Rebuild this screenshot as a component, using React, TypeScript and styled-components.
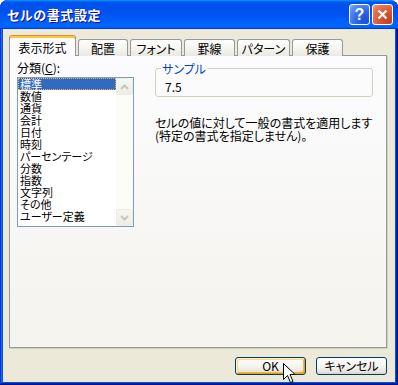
import React from "react";
import styled, { createGlobalStyle, css } from "styled-components";

const GlobalStyle = createGlobalStyle`
  html, body {
    margin: 0;
    padding: 0;
    background: #ffffff;
  }
  body {
    font-family: "Noto Sans CJK JP", "Noto Sans", sans-serif;
    font-size: 12px;
    font-feature-settings: "palt";
    color: #000;
  }
  * {
    box-sizing: border-box;
  }
`;

const Window = styled.div`
  position: relative;
  width: 398px;
  height: 385px;
  display: flex;
  flex-direction: column;
  background: #0054e3;
  border-radius: 8px 8px 0 0;
  box-shadow: inset -1px -1px #00138c, inset 1px 0 #0831d9, inset -2px -2px #001ea0,
    inset 2px 0 #166aee;
  overflow: hidden;
`;

const TitleBar = styled.div`
  height: 29px;
  flex: none;
  display: flex;
  align-items: center;
  justify-content: space-between;
  padding: 0 5px 0 7px;
  border-radius: 8px 8px 0 0;
  background: linear-gradient(
    180deg,
    #0997ff 0%,
    #0053ee 8%,
    #0050ee 40%,
    #06f 88%,
    #06f 93%,
    #005bff 95%,
    #003dd7 96%,
    #003dd7 100%
  );
`;

const Title = styled.div`
  color: #fff;
  font-weight: 700;
  font-size: 13px;
  letter-spacing: 0.6px;
  text-shadow: 1px 1px #0f1089;
`;

const Controls = styled.div`
  display: flex;
  gap: 2px;
`;

const ControlButton = styled.div<{ $kind: "help" | "close" }>`
  width: 21px;
  height: 21px;
  border: 1px solid #fff;
  border-radius: 3px;
  display: flex;
  align-items: center;
  justify-content: center;
  color: #fff;
  font-family: "Liberation Sans", sans-serif;
  font-weight: 700;
  font-size: 16px;
  ${(p) =>
    p.$kind === "help"
      ? css`
          background: radial-gradient(circle at 85% 85%, #1a4fd8 0%, #2a63e8 40%, #5a8ef5 80%, #8fb2fa 100%);
        `
      : css`
          background: radial-gradient(circle at 85% 85%, #c5431b 0%, #d9532b 40%, #e8795a 80%, #f2a48a 100%);
        `}
`;

const Client = styled.div`
  flex: 1;
  margin: 0 3px 3px 3px;
  background: #ece9d8;
  display: flex;
  flex-direction: column;
  padding: 7px 8px 6px 6px;
`;

const TabRow = styled.div`
  height: 20px;
  display: flex;
  align-items: flex-end;
  gap: 2px;
  margin-bottom: -1px;
  position: relative;
  z-index: 1;
`;

const Tab = styled.div<{ $w: number; $active?: boolean }>`
  width: ${(p) => p.$w}px;
  height: 17px;
  border: 1px solid #919b9c;
  border-bottom: none;
  border-radius: 3px 3px 0 0;
  background: linear-gradient(180deg, #ffffff 0%, #f3f3ef 60%, #e9e8e1 100%);
  text-align: center;
  line-height: 16px;
  padding-top: 1px;
  ${(p) =>
    p.$active &&
    css`
      height: 21px;
      padding-top: 4px;
      border-top: 1px solid #e68b2c;
      box-shadow: inset 0 2px #ffc73c;
      background: #fcfcfe;
    `}
`;

const Panel = styled.div`
  height: 293px;
  border: 1px solid #919b9c;
  box-shadow: 1px 1px #d0cec1;
  background: linear-gradient(180deg, #fcfcfe 0%, #f4f3ee 100%);
  display: flex;
  padding: 5px 0 0 7px;
`;

const LeftColumn = styled.div`
  width: 117px;
  display: flex;
  flex-direction: column;
`;

const Label = styled.div`
  line-height: 13px;
  height: 13px;
  u {
    text-decoration: underline;
  }
`;

const ListBox = styled.div`
  margin-top: 3px;
  height: 150px;
  border: 1px solid #7f9db9;
  background: #fff;
  display: flex;
`;

const Items = styled.div`
  flex: 1;
  display: flex;
  flex-direction: column;
`;

const Item = styled.div<{ $selected?: boolean }>`
  height: 12px;
  line-height: 12px;
  font-size: 11px;
  padding-left: 2px;
  white-space: nowrap;
  ${(p) =>
    p.$selected &&
    css`
      background: #316ac5;
      color: #fff;
      outline: 1px dotted #f0b44c;
      outline-offset: -1px;
    `}
`;

const ScrollBar = styled.div`
  width: 17px;
  display: flex;
  flex-direction: column;
  background: #fcfcf9;
`;

const ScrollTrack = styled.div`
  flex: 1;
`;

const ScrollButton = styled.div`
  height: 17px;
  border: 1px solid #eeede5;
  border-radius: 2px;
  background: linear-gradient(180deg, #f6f5f0 0%, #eeede5 100%);
  display: flex;
  align-items: center;
  justify-content: center;
`;

const RightColumn = styled.div`
  width: 218px;
  margin-left: 21px;
  padding-top: 1px;
  display: flex;
  flex-direction: column;
`;

const GroupBox = styled.fieldset`
  margin: 0;
  min-width: 0;
  padding: 5px 8px 3px 5px;
  border: 1px solid #d0d0bf;
  border-radius: 3px;
`;

const Legend = styled.legend`
  padding: 0 1px;
  color: #0046d5;
  line-height: 13px;
`;

const SampleValue = styled.div`
  margin-left: 4px;
  line-height: 13px;
`;

const Description = styled.div`
  margin-top: 19px;
  line-height: 13px;
  white-space: nowrap;
`;

const ButtonRow = styled.div`
  margin-top: 9px;
  display: flex;
  justify-content: flex-end;
  gap: 10px;
`;

const Button = styled.div<{ $hover?: boolean }>`
  width: 71px;
  height: 18px;
  border: 1px solid #003c74;
  border-radius: 3px;
  background: linear-gradient(180deg, #ffffff 0%, #f3f3ef 55%, #e6e4dc 86%, #d6d0c5 100%);
  text-align: center;
  line-height: 16px;
  ${(p) =>
    p.$hover &&
    css`
      box-shadow: inset 1px 1px #fff0cf, inset -1px -1px #e5a01a, inset 2px 2px #fdd889,
        inset -2px -2px #f8b330;
    `}
`;

const Cursor = styled.svg`
  position: absolute;
  left: 283px;
  top: 363px;
`;

const categories = [
  "標準",
  "数値",
  "通貨",
  "会計",
  "日付",
  "時刻",
  "パーセンテージ",
  "分数",
  "指数",
  "文字列",
  "その他",
  "ユーザー定義",
];

const tabs = [
  { label: "表示形式", w: 67 },
  { label: "配置", w: 50 },
  { label: "フォント", w: 52 },
  { label: "罫線", w: 51 },
  { label: "パターン", w: 53 },
  { label: "保護", w: 51 },
];

const Chevron = ({ up }: { up?: boolean }) => (
  <svg width="9" height="6" viewBox="0 0 9 6">
    <path
      d={up ? "M1 5 L4.5 1.5 L8 5" : "M1 1 L4.5 4.5 L8 1"}
      fill="none"
      stroke="#c9c7ba"
      strokeWidth="2"
    />
  </svg>
);

const App = () => {
  return (
    <>
      <GlobalStyle />
      <Window>
        <TitleBar>
          <Title>セルの書式設定</Title>
          <Controls>
            <ControlButton $kind="help">?</ControlButton>
            <ControlButton $kind="close">
              <svg width="11" height="11" viewBox="0 0 11 11">
                <path d="M1.5 1.5 L9.5 9.5 M9.5 1.5 L1.5 9.5" stroke="#fff" strokeWidth="2.2" />
              </svg>
            </ControlButton>
          </Controls>
        </TitleBar>
        <Client>
          <TabRow>
            {tabs.map((t, i) => (
              <Tab key={t.label} $w={t.w} $active={i === 0}>
                {t.label}
              </Tab>
            ))}
          </TabRow>
          <Panel>
            <LeftColumn>
              <Label>
                分類(<u>C</u>):
              </Label>
              <ListBox>
                <Items>
                  {categories.map((c, i) => (
                    <Item key={c} $selected={i === 0}>
                      {c}
                    </Item>
                  ))}
                </Items>
                <ScrollBar>
                  <ScrollButton>
                    <Chevron up />
                  </ScrollButton>
                  <ScrollTrack />
                  <ScrollButton>
                    <Chevron />
                  </ScrollButton>
                </ScrollBar>
              </ListBox>
            </LeftColumn>
            <RightColumn>
              <GroupBox>
                <Legend>サンプル</Legend>
                <SampleValue>7.5</SampleValue>
              </GroupBox>
              <Description>
                セルの値に対して一般の書式を適用します
                <br />
                (特定の書式を指定しません)。
              </Description>
            </RightColumn>
          </Panel>
          <ButtonRow>
            <Button $hover>OK</Button>
            <Button>キャンセル</Button>
          </ButtonRow>
        </Client>
        <Cursor width="13" height="21" viewBox="0 0 13 21">
          <path
            d="M0.5 0.5 L0.5 16.5 L4.5 12.5 L7.5 19.5 L10 18.5 L7 11.5 L12 11.5 Z"
            fill="#fff"
            stroke="#000"
            strokeWidth="1"
          />
        </Cursor>
      </Window>
    </>
  );
};

export default App;
